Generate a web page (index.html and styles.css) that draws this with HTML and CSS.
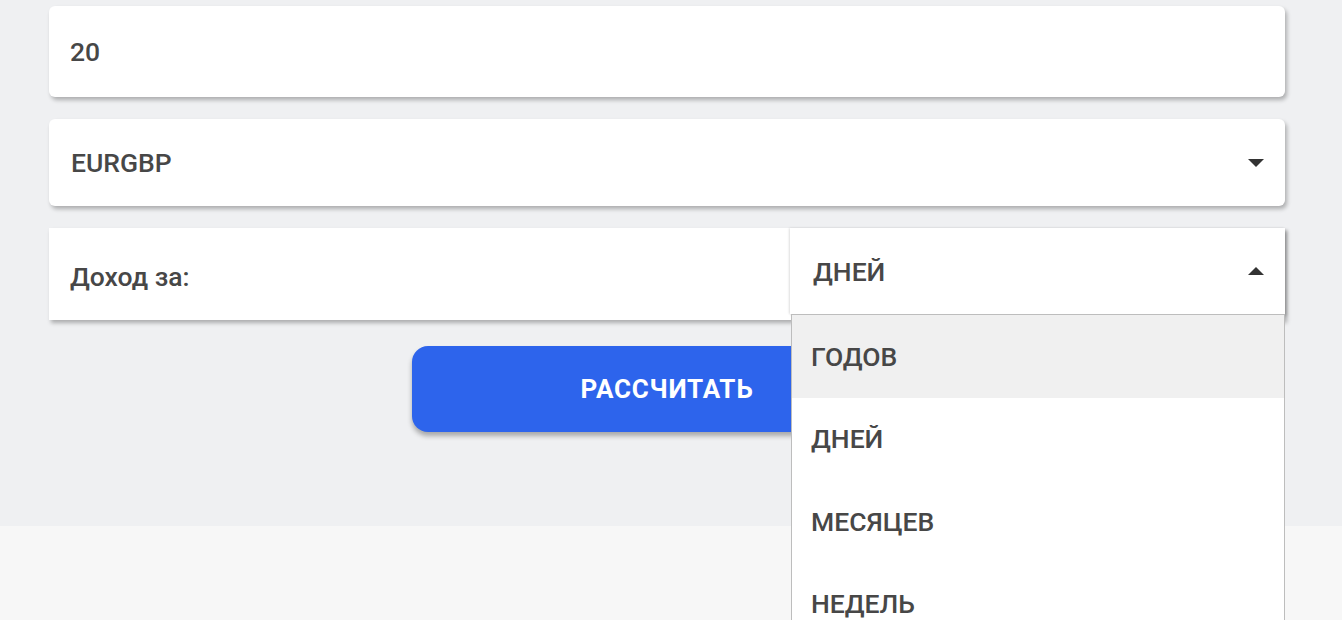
FILE: index.html
```html
<!DOCTYPE html>
<html lang="ru">
<head>
  <meta charset="UTF-8" />
  <meta name="viewport" content="width=device-width, initial-scale=1.0"/>
  <title>Калькулятор дохода</title>
  <link rel="stylesheet" href="styles.css">
</head>
<body>

  <div class="calc">
    <div class="field">
      <span class="value">20</span>
    </div>

    <div class="field select">
      <span class="value">EURGBP</span>
      <span class="arrow down"></span>
    </div>

    <div class="field period">
      <div class="period-label">Доход за:</div>
      <div class="period-select">
        <span class="value">ДНЕЙ</span>
        <span class="arrow up"></span>
        <ul class="menu">
          <li class="active">ГОДОВ</li>
          <li>ДНЕЙ</li>
          <li>МЕСЯЦЕВ</li>
          <li>НЕДЕЛЬ</li>
        </ul>
      </div>
    </div>

    <button class="calc-btn">РАССЧИТАТЬ</button>
  </div>

  <div class="footer">
    <h2 class="footer-title">Доход</h2>
  </div>

</body>
</html>
```

FILE: styles.css
```css
* { box-sizing: border-box; }

body {
  margin: 0;
  font-family: Roboto, "Liberation Sans", sans-serif;
  background: #f7f7f7;
  color: #474747;
}

.calc {
  background: #eff0f2;
  padding: 6px 57px 94px 49px;
  display: flex;
  flex-direction: column;
  gap: 22px;
}

.field {
  background: #fff;
  border-radius: 6px;
  height: 91px;
  display: flex;
  align-items: center;
  padding: 0 21px;
  box-shadow: 2px 3px 4px rgba(0, 0, 0, 0.28);
}

.value {
  font-size: 26.5px;
  font-weight: 500;
  color: #474747;
}

.select {
  height: 87px;
  justify-content: space-between;
  padding: 0 21px 0 22px;
}

.arrow {
  width: 0;
  height: 0;
  border-left: 8px solid transparent;
  border-right: 8px solid transparent;
}

.arrow.down { border-top: 8px solid #333; }
.arrow.up { border-bottom: 8px solid #333; }

.period {
  height: 92px;
  padding: 0;
  border-radius: 0;
  align-items: flex-start;
}

.period-label {
  flex: 1;
  align-self: center;
  padding: 4px 21px 0;
  font-size: 26.5px;
  font-weight: 500;
  color: #474747;
}

.period-select {
  position: relative;
  width: 495px;
  height: 86px;
  display: flex;
  align-items: center;
  justify-content: space-between;
  padding: 0 21px 0 23px;
  box-shadow: -1px 0 2px rgba(0, 0, 0, 0.12), 2px 2px 3px rgba(0, 0, 0, 0.2);
  background: #fff;
}

.menu {
  position: absolute;
  top: 100%;
  left: 1px;
  right: 0;
  margin: 0;
  padding: 0;
  list-style: none;
  background: #fff;
  border: 1px solid #bdbdbd;
  z-index: 10;
}

.menu li {
  height: 82.5px;
  padding: 0 19px;
  display: flex;
  align-items: center;
  font-size: 26.5px;
  font-weight: 500;
  color: #474747;
}

.menu li.active {
  background: #f0f0f0;
}

.calc-btn {
  align-self: center;
  margin-top: 4px;
  width: 510px;
  height: 86px;
  border: none;
  border-radius: 16px;
  background: #2d64ec;
  color: #fff;
  font-family: Roboto, "Liberation Sans", sans-serif;
  font-size: 26px;
  font-weight: 700;
  letter-spacing: 0.8px;
  box-shadow: 0 4px 5px rgba(0, 0, 0, 0.3);
  cursor: pointer;
}

.footer {
  height: 200px;
  padding-top: 91px;
  text-align: center;
}

.footer-title {
  margin: 0;
  font-size: 28px;
  color: #444;
}
```
